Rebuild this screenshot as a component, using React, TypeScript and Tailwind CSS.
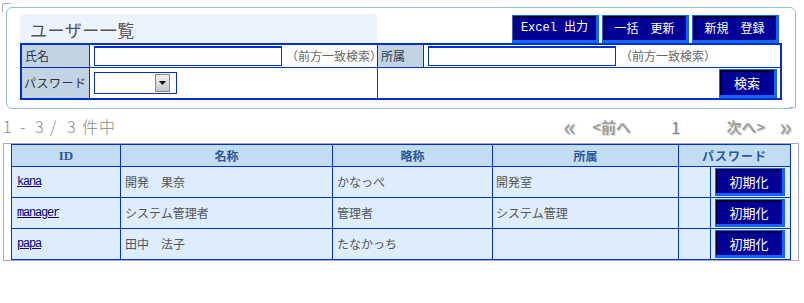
import type { ReactNode } from "react";

type User = { id: string; name: string; short: string; dept: string };

const USERS: User[] = [
  { id: "kana", name: "開発　果奈", short: "かなっぺ", dept: "開発室" },
  { id: "manager", name: "システム管理者", short: "管理者", dept: "システム管理" },
  { id: "papa", name: "田中　法子", short: "たなかっち", dept: "" },
];

const JP = "font-['Noto_Sans_CJK_JP',sans-serif]";

// Navy button: thin bright rim on top/left, dark inner line, thick bright right/bottom edge.
function NavyButton({ children, className }: { children: ReactNode; className: string }) {
  return (
    <button
      type="button"
      className={`flex items-center justify-center border-t border-l border-r-[3px] border-b-[3px] border-[#1464ff] bg-[#000096] text-[12px] leading-none text-white shadow-[inset_2px_2px_0_#000028] ${className}`}
    >
      {children}
    </button>
  );
}

function TextInput() {
  return (
    <div className="h-[20px] w-[188px] shrink-0 border border-t-2 border-[#0030d0] bg-white" />
  );
}

function Hint() {
  return (
    <span className="ml-[4px] shrink-0 whitespace-nowrap text-[12px] leading-none text-[#666]">
      （前方一致検索）
    </span>
  );
}

export default function App() {
  return (
    <div className={`relative h-[303px] w-[804px] overflow-hidden bg-white ${JP}`}>
      {/* little corner marks of the search panel */}
      <span className="absolute left-[2px] top-[3px] h-[9px] w-[9px] rounded-tl-[3px] border-l border-t border-[#b4b4b4]" />
      <span className="absolute left-[789px] top-[100px] h-[8px] w-[7px] rounded-br-[2px] border-b border-r border-[#b4b4b4] bg-white" />

      {/* search panel */}
      <section className="ml-[6px] mt-[7px] h-[102px] w-[790px] rounded-[6px] border border-[#90c0d0] pl-[13px] pr-[13px] pt-[6px]">
        <div className="flex items-end justify-between">
          <h1 className="flex h-[29px] w-[357px] items-center bg-[#ecf3fd] pl-[10px] pt-[2px] text-[17px] leading-none tracking-[0.5px] text-[#555]">
            ユーザー一覧
          </h1>
          <div className="mr-[3px] flex gap-[3px]">
            <NavyButton className="h-[28px] w-[87px] font-['Liberation_Mono','Noto_Sans_CJK_JP',monospace]">
              Excel 出力
            </NavyButton>
            <NavyButton className="h-[28px] w-[87px]">一括　更新</NavyButton>
            <NavyButton className="h-[28px] w-[87px]">新規　登録</NavyButton>
          </div>
        </div>

        <div className="w-[762px] border-2 border-[#0030d0] text-[12px] leading-none">
          <div className="flex h-[23px] border-b border-[#0030d0]">
            <div className="flex w-[68px] items-center border-r border-[#0030d0] bg-[#c2d3e3] pl-[3px] text-[#334]">
              氏名
            </div>
            <div className="flex w-[288px] items-center border-r border-[#0030d0] pl-[4px]">
              <TextInput />
              <Hint />
            </div>
            <div className="flex w-[46px] items-center border-r border-[#0030d0] bg-[#c2d3e3] pl-[3px] text-[#334]">
              所属
            </div>
            <div className="flex flex-1 items-center pl-[4px]">
              <TextInput />
              <Hint />
            </div>
          </div>
          <div className="flex h-[30px]">
            <div className="flex w-[68px] items-center border-r border-[#0030d0] bg-[#c2d3e3] pl-[2px] tracking-[0.5px] text-[#334]">
              パスワード
            </div>
            <div className="flex w-[288px] items-center border-r border-[#0030d0] pl-[4px]">
              <div className="flex h-[22px] w-[83px] items-center border border-[#0030d0] bg-white">
                <span className="ml-[60px] flex h-[18px] w-[15px] items-center justify-center border border-[#888] bg-gradient-to-b from-[#f0f0f0] to-[#c8c8c8]">
                  <svg width="7" height="4" viewBox="0 0 7 4">
                    <path d="M0 0h7L3.5 4z" fill="#000" />
                  </svg>
                </span>
              </div>
            </div>
            <div className="flex flex-1 items-center justify-end pr-[3px]">
              <NavyButton className="h-[29px] w-[58px] text-[13px]">検索</NavyButton>
            </div>
          </div>
        </div>
      </section>

      {/* count + pager */}
      <div className="flex h-[34px] items-center justify-between pl-[3px] pr-[12px] text-[#888]">
        <div className="flex items-center text-[16px] font-light leading-none">
          <span className="w-[17px]">1</span>
          <span className="w-[15px]">-</span>
          <span className="w-[15px]">3</span>
          <span className="w-[17px]">/</span>
          <span className="w-[15px]">3</span>
          <span className="tracking-[1px]">件中</span>
        </div>
        <div className="flex items-center text-[15px] font-bold leading-none text-[#a0a0a0] [text-shadow:1px_1px_0_#d8d8d8]">
          <span className="text-[24px]">«</span>
          <span className="ml-[16px]">&lt;前へ</span>
          <span className="ml-[40px] text-[17px] font-normal text-[#888]">1</span>
          <span className="ml-[46px]">次へ&gt;</span>
          <span className="ml-[14px] text-[24px]">»</span>
        </div>
      </div>

      {/* result table */}
      <div className="ml-[3px] h-[118px] w-[796px] border border-[#a8a4dc] pl-[7px]">
        <div className="w-[780px] border border-[#0030e0] text-[12px] leading-none">
          <div className="flex h-[22px] border-b border-[#0030e0] bg-[#c2dcf4] font-bold text-[#2a5896]">
            <div className="flex w-[109px] items-center justify-center border-r border-[#0030e0] font-['Liberation_Serif',serif] text-[13px]">
              ID
            </div>
            <div className="flex w-[212px] items-center justify-center border-r border-[#0030e0]">名称</div>
            <div className="flex w-[160px] items-center justify-center border-r border-[#0030e0]">略称</div>
            <div className="flex w-[186px] items-center justify-center border-r border-[#0030e0]">所属</div>
            <div className="flex flex-1 items-center justify-center tracking-[1px]">パスワード</div>
          </div>
          {USERS.map((u, i) => (
            <div
              key={u.id}
              className={`flex bg-[#ddedfc] text-[#555] ${i < USERS.length - 1 ? "h-[31px] border-b border-[#0030e0]" : "h-[30px]"}`}
            >
              <div className="flex w-[109px] items-center border-r border-[#0030e0] pl-[5px]">
                <a
                  href="#"
                  className="font-['Liberation_Mono',monospace] text-[12px] tracking-[-1.2px] text-[#000080] underline"
                >
                  {u.id}
                </a>
              </div>
              <div className="flex w-[212px] items-center border-r border-[#0030e0] pl-[4px]">{u.name}</div>
              <div className="flex w-[160px] items-center border-r border-[#0030e0] pl-[4px]">{u.short}</div>
              <div className="flex w-[186px] items-center border-r border-[#0030e0] pl-[3px]">{u.dept}</div>
              <div className="flex flex-1">
                <div className="w-[32px] border-r border-[#0030e0]" />
                <div className="flex flex-1 items-center pl-[4px]">
                  <NavyButton className="h-[28px] w-[70px] text-[13px]">初期化</NavyButton>
                </div>
              </div>
            </div>
          ))}
        </div>
      </div>
    </div>
  );
}
